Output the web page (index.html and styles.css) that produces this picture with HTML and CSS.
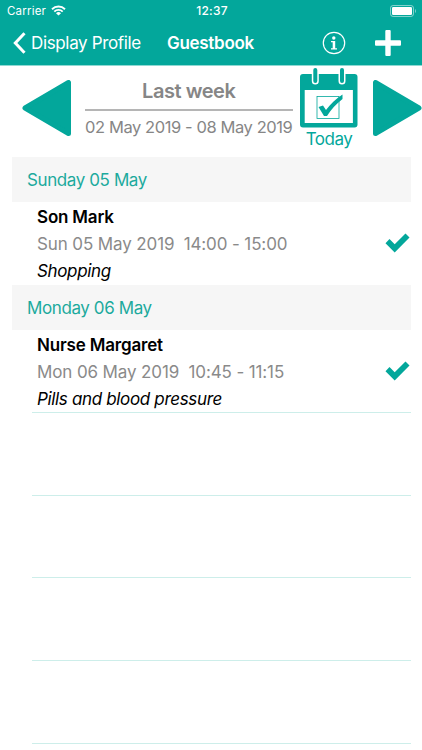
FILE: index.html
```html
<!DOCTYPE html>
<html lang="en">
  <head>
    <meta charset="UTF-8" />
    <meta name="viewport" content="width=device-width, initial-scale=1.0" />
    <title>Guestbook</title>
    <link rel="stylesheet" href="styles.css">
  </head>
  <body>
    <header class="header">
      <div class="status-bar">
        <div class="status-left">
          <span class="carrier">Carrier</span>
          <svg class="wifi" width="15" height="11" viewBox="0 0 15 11" fill="none" stroke="#fff" stroke-width="1.9">
            <path d="M1 4.2a9.3 9.3 0 0 1 13 0" />
            <path d="M3.3 6.6a6 6 0 0 1 8.4 0" />
            <path d="M7.5 10.6L5 8.2a3.6 3.6 0 0 1 5 0z" fill="#fff" stroke="none" />
          </svg>
        </div>
        <span class="time">12:37</span>
        <svg class="battery" width="27" height="12" viewBox="0 0 27 12">
          <rect x=".5" y=".5" width="23" height="11" rx="2.6" fill="none" stroke="#fff" stroke-opacity=".5" />
          <rect x="2" y="2" width="20" height="8" rx="1.2" fill="#fff" />
          <path d="M25 4v4c1.3-.5 1.3-3.5 0-4z" fill="#fff" fill-opacity=".5" />
        </svg>
      </div>
      <nav class="nav-bar">
        <a class="back">
          <svg width="13" height="22" viewBox="0 0 13 22" fill="none" stroke="#fff" stroke-width="3">
            <path d="M11.500 1.200L2.300 11l9.200 9.800" />
          </svg>
          <span class="back-label">Display Profile</span>
        </a>
        <h1 class="title">Guestbook</h1>
        <svg class="info" width="24" height="24" viewBox="0 0 24 24">
          <circle cx="12" cy="12" r="10.700" fill="none" stroke="#fff" stroke-width="1.200" />
          <circle cx="11.800" cy="7" r="1.700" fill="#fff" />
          <path d="M9 10h4.200v7.200h1.800v1.300H9v-1.300h1.700v-5.900H9z" fill="#fff" />
        </svg>
        <svg class="plus" width="26" height="26" viewBox="0 0 26 26" fill="#fff">
          <rect x="10.300" y="0" width="5.400" height="26" rx="1" />
          <rect x="0" y="10.300" width="26" height="5.400" rx="1" />
        </svg>
      </nav>
    </header>

    <section class="week">
      <svg class="arrow" width="49" height="56" viewBox="0 0 49 56">
        <path d="M46.500 2.500v51L3 28z" fill="#03a79b" stroke="#03a79b" stroke-width="5" stroke-linejoin="round" />
      </svg>
      <div class="range">
        <div class="range-name">Last week</div>
        <div class="range-dates">02 May 2019 - 08 May 2019</div>
      </div>
      <div class="today">
        <svg width="58" height="60" viewBox="0 0 58 60">
          <rect x="0" y="6" width="57.500" height="53.500" rx="3" fill="#03a79b" />
          <rect x="4.700" y="22" width="48.200" height="33" fill="#fff" />
          <g stroke-linecap="round">
            <path d="M15.300 6v7M42 6v7" stroke="#fff" stroke-width="7" />
            <path d="M15.300 2v11M42 2v11" stroke="#03a79b" stroke-width="4" />
          </g>
          <rect x="17" y="28.500" width="22" height="22" fill="none" stroke="#03a79b" stroke-width=".8" />
          <path d="M18.500 39l4.500-1.500 3 4.500c4.500-6 9.500-11 16.500-15.500v4.500C36.500 35.500 31 41.500 27 48h-3z" fill="#03a79b" />
        </svg>
        <span class="today-label">Today</span>
      </div>
      <svg class="arrow arrow-next" width="49" height="56" viewBox="0 0 49 56">
        <path d="M2.500 2.500v51L46 28z" fill="#03a79b" stroke="#03a79b" stroke-width="5" stroke-linejoin="round" />
      </svg>
    </section>

    <main class="list">
      <h2 class="day">Sunday 05 May</h2>
      <article class="visit">
        <div class="visit-text">
          <div class="name">Son Mark</div>
          <div class="when">Sun 05 May 2019&nbsp; 14:00 - 15:00</div>
          <div class="note">Shopping</div>
        </div>
        <svg class="check" width="25" height="20" viewBox="0 0 25 20">
          <path d="M.5 10.300l4-4.300 5.200 5.300L20.500.5l4 4L9.700 19.500z" fill="#03a79b" />
        </svg>
      </article>
      <h2 class="day">Monday 06 May</h2>
      <article class="visit">
        <div class="visit-text">
          <div class="name">Nurse Margaret</div>
          <div class="when">Mon 06 May 2019&nbsp; 10:45 - 11:15</div>
          <div class="note">Pills and blood pressure</div>
        </div>
        <svg class="check" width="25" height="20" viewBox="0 0 25 20">
          <path d="M.5 10.300l4-4.300 5.200 5.300L20.500.5l4 4L9.700 19.500z" fill="#03a79b" />
        </svg>
      </article>
      <div class="empty-row"></div>
      <div class="empty-row"></div>
      <div class="empty-row"></div>
      <div class="empty-row"></div>
      <div class="empty-row empty-row-last"></div>
    </main>
  </body>
</html>
```

FILE: styles.css
```css
* {
  box-sizing: border-box;
}

body {
  margin: 0;
  background-color: #fff;
  font-family: Inter, "Liberation Sans", sans-serif;
  font-size: 17px;
  white-space: nowrap;
}

svg {
  display: block;
  flex-shrink: 0;
}

.header {
  height: 66px;
  background-color: #03a79b;
  border-bottom: 1px solid #8fd9d3;
  color: #fff;
}

.status-bar {
  display: grid;
  grid-template-columns: 1fr auto 1fr;
  align-items: center;
  height: 21px;
  padding: 0 5px 0 7px;
  font-size: 11.5px;
}

.status-left {
  display: flex;
  align-items: center;
  gap: 5px;
}

.carrier {
  letter-spacing: 0.2px;
}

.time {
  font-weight: 500;
  font-size: 12px;
  letter-spacing: 0.2px;
}

.battery {
  justify-self: end;
}

.nav-bar {
  display: flex;
  align-items: center;
  height: 44px;
  padding-left: 13px;
}

.back {
  display: flex;
  align-items: center;
  gap: 5px;
  width: 154px;
}

.back-label {
  letter-spacing: -0.35px;
}

.title {
  width: 155px;
  margin: 0;
  font-size: 17px;
  font-weight: 600;
  letter-spacing: -0.3px;
}

.plus {
  margin-left: 29px;
}

.week {
  display: flex;
  height: 91px;
  padding-left: 22px;
  overflow: hidden;
}

.arrow {
  margin-top: 14px;
}

.arrow-next {
  margin-left: 15px;
}

.range {
  width: 208px;
  margin-left: 14px;
  color: #868686;
  text-align: center;
}

.range-name {
  height: 45px;
  padding-top: 7px;
  border-bottom: 2px solid #b5b5b5;
  font-size: 20px;
  font-weight: 600;
  line-height: 36px;
  letter-spacing: -0.45px;
}

.range-dates {
  font-size: 16.5px;
  line-height: 33px;
  letter-spacing: -0.42px;
}

.today {
  width: 58px;
  margin-left: 7.5px;
  padding-top: 2px;
  color: #03a79b;
  text-align: center;
}

.today-label {
  display: block;
  line-height: 23px;
  letter-spacing: -0.5px;
}

.list {
  padding: 0 11px 0 12px;
}

.day {
  height: 45px;
  margin: 0;
  padding-left: 15px;
  background-color: #f6f6f6;
  color: #1caa9d;
  font-size: 17px;
  font-weight: 400;
  line-height: 47px;
  letter-spacing: -0.4px;
}

.visit {
  display: flex;
  justify-content: space-between;
  height: 83px;
  padding-left: 25px;
}

.visit:last-of-type {
  height: 82px;
}

.visit-text {
  padding-top: 2px;
  line-height: 27px;
}

.name {
  font-weight: 600;
  letter-spacing: -0.18px;
}

.when {
  color: #8a8a8a;
  letter-spacing: -0.12px;
}

.note {
  font-style: italic;
  letter-spacing: -0.34px;
}

.check {
  margin: 31px 1px 0 0;
}

.empty-row {
  height: 82.7px;
  margin-left: 20px;
  border-top: 1px solid #cdeeea;
}

.empty-row-last {
  height: 7px;
}
```
